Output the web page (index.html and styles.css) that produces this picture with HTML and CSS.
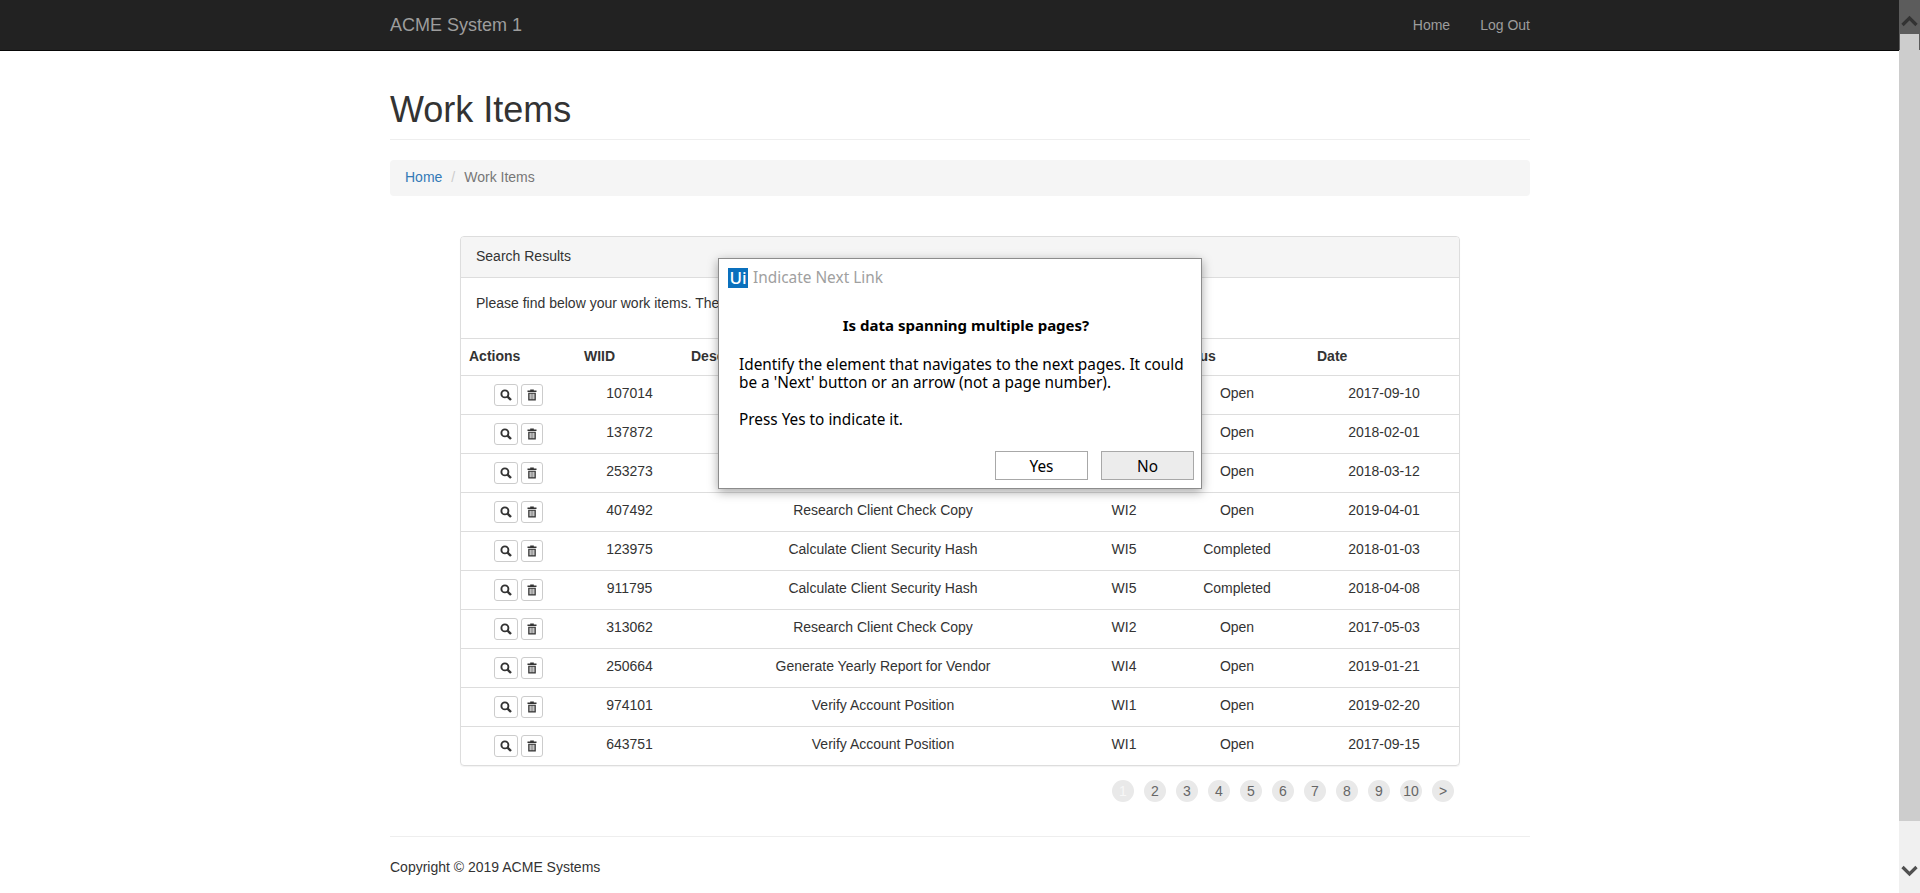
FILE: index.html
```html
<!DOCTYPE html>
<html lang="en">
<head>
    <meta charset="UTF-8">
    <meta name="viewport" content="width=device-width, initial-scale=1.0">
    <title>Work Items</title>
    <link rel="stylesheet" href="styles.css">
</head>
<body>
    <svg class="icon-defs" xmlns="http://www.w3.org/2000/svg">
        <symbol id="icon-search" viewBox="0 0 12 12">
            <circle cx="4.9" cy="4.9" r="3.5" fill="none" stroke="currentColor" stroke-width="1.9"/>
            <path d="M7.6 7.6 L11 11" fill="none" stroke="currentColor" stroke-width="2.4"/>
        </symbol>
        <symbol id="icon-trash" viewBox="0 0 12 12">
            <path fill="currentColor" fill-rule="evenodd" d="M4.2 0.5 H7.8 V1.6 H10.5 V3 H1.5 V1.6 H4.2 Z M2.2 3.7 H9.8 V11.5 H2.2 Z M3.6 4.8 V10.2 H4.7 V4.8 Z M5.45 4.8 V10.2 H6.55 V4.8 Z M7.3 4.8 V10.2 H8.4 V4.8 Z"/>
        </symbol>
    </svg>

    <nav class="navbar">
        <div class="container navbar-inner">
            <a class="brand">ACME System 1</a>
            <ul class="nav-links">
                <li><a>Home</a></li>
                <li><a>Log Out</a></li>
            </ul>
        </div>
    </nav>

    <div class="container">
        <div class="page-header">
            <h1>Work Items</h1>
        </div>

        <ol class="breadcrumb">
            <li><a>Home</a></li>
            <li class="sep">/</li>
            <li class="current">Work Items</li>
        </ol>

        <div class="results">
            <div class="panel">
                <div class="panel-heading">Search Results</div>
                <div class="panel-body">Please find below your work items. There are more pages below.</div>
                <table class="items">
                    <thead>
                        <tr>
                            <th class="col-actions">Actions</th>
                            <th class="col-id">WIID</th>
                            <th class="col-desc">Description</th>
                            <th class="col-type">Type</th>
                            <th class="col-status">Status</th>
                            <th class="col-date">Date</th>
                        </tr>
                    </thead>
                    <tbody>
                        <tr>
                            <td><div class="actions"><button class="btn-xs btn-view"><svg class="icon"><use href="#icon-search"/></svg></button><button class="btn-xs"><svg class="icon"><use href="#icon-trash"/></svg></button></div></td>
                            <td>107014</td><td>Calculate Client Security Hash</td><td>WI5</td><td>Open</td><td>2017-09-10</td>
                        </tr>
                        <tr>
                            <td><div class="actions"><button class="btn-xs btn-view"><svg class="icon"><use href="#icon-search"/></svg></button><button class="btn-xs"><svg class="icon"><use href="#icon-trash"/></svg></button></div></td>
                            <td>137872</td><td>Research Client Check Copy</td><td>WI2</td><td>Open</td><td>2018-02-01</td>
                        </tr>
                        <tr>
                            <td><div class="actions"><button class="btn-xs btn-view"><svg class="icon"><use href="#icon-search"/></svg></button><button class="btn-xs"><svg class="icon"><use href="#icon-trash"/></svg></button></div></td>
                            <td>253273</td><td>Verify Account Position</td><td>WI1</td><td>Open</td><td>2018-03-12</td>
                        </tr>
                        <tr>
                            <td><div class="actions"><button class="btn-xs btn-view"><svg class="icon"><use href="#icon-search"/></svg></button><button class="btn-xs"><svg class="icon"><use href="#icon-trash"/></svg></button></div></td>
                            <td>407492</td><td>Research Client Check Copy</td><td>WI2</td><td>Open</td><td>2019-04-01</td>
                        </tr>
                        <tr>
                            <td><div class="actions"><button class="btn-xs btn-view"><svg class="icon"><use href="#icon-search"/></svg></button><button class="btn-xs"><svg class="icon"><use href="#icon-trash"/></svg></button></div></td>
                            <td>123975</td><td>Calculate Client Security Hash</td><td>WI5</td><td>Completed</td><td>2018-01-03</td>
                        </tr>
                        <tr>
                            <td><div class="actions"><button class="btn-xs btn-view"><svg class="icon"><use href="#icon-search"/></svg></button><button class="btn-xs"><svg class="icon"><use href="#icon-trash"/></svg></button></div></td>
                            <td>911795</td><td>Calculate Client Security Hash</td><td>WI5</td><td>Completed</td><td>2018-04-08</td>
                        </tr>
                        <tr>
                            <td><div class="actions"><button class="btn-xs btn-view"><svg class="icon"><use href="#icon-search"/></svg></button><button class="btn-xs"><svg class="icon"><use href="#icon-trash"/></svg></button></div></td>
                            <td>313062</td><td>Research Client Check Copy</td><td>WI2</td><td>Open</td><td>2017-05-03</td>
                        </tr>
                        <tr>
                            <td><div class="actions"><button class="btn-xs btn-view"><svg class="icon"><use href="#icon-search"/></svg></button><button class="btn-xs"><svg class="icon"><use href="#icon-trash"/></svg></button></div></td>
                            <td>250664</td><td>Generate Yearly Report for Vendor</td><td>WI4</td><td>Open</td><td>2019-01-21</td>
                        </tr>
                        <tr>
                            <td><div class="actions"><button class="btn-xs btn-view"><svg class="icon"><use href="#icon-search"/></svg></button><button class="btn-xs"><svg class="icon"><use href="#icon-trash"/></svg></button></div></td>
                            <td>974101</td><td>Verify Account Position</td><td>WI1</td><td>Open</td><td>2019-02-20</td>
                        </tr>
                        <tr>
                            <td><div class="actions"><button class="btn-xs btn-view"><svg class="icon"><use href="#icon-search"/></svg></button><button class="btn-xs"><svg class="icon"><use href="#icon-trash"/></svg></button></div></td>
                            <td>643751</td><td>Verify Account Position</td><td>WI1</td><td>Open</td><td>2017-09-15</td>
                        </tr>
                    </tbody>
                </table>
            </div>

            <div class="pagination">
                <a class="page active">1</a>
                <a class="page">2</a>
                <a class="page">3</a>
                <a class="page">4</a>
                <a class="page">5</a>
                <a class="page">6</a>
                <a class="page">7</a>
                <a class="page">8</a>
                <a class="page">9</a>
                <a class="page">10</a>
                <a class="page">&gt;</a>
            </div>
        </div>

        <footer class="footer">Copyright © 2019 ACME Systems</footer>
    </div>

    <!-- UiPath prompt sits over the page -->
    <div class="dialog">
        <div class="dialog-title">
            <span class="logo">Ui</span>
            <span>Indicate Next Link</span>
        </div>
        <p class="dialog-question">Is data spanning multiple pages?</p>
        <p class="dialog-text">Identify the element that navigates to the next pages. It could be a 'Next' button or an arrow (not a page number).</p>
        <p class="dialog-text dialog-press">Press Yes to indicate it.</p>
        <div class="dialog-buttons">
            <button class="dialog-btn">Yes</button>
            <button class="dialog-btn dialog-btn-no">No</button>
        </div>
    </div>

    <!-- Browser scrollbar as captured in the screenshot -->
    <div class="scrollbar">
        <div class="scroll-up">
            <svg width="17" height="12" viewBox="0 0 17 12"><path d="M1.5 10 L8.5 3 L15.5 10" fill="none" stroke="#333" stroke-width="3.2"/></svg>
        </div>
        <div class="scroll-thumb"></div>
        <div class="scroll-track">
            <svg width="17" height="12" viewBox="0 0 17 12"><path d="M1.5 2 L8.5 9 L15.5 2" fill="none" stroke="#505050" stroke-width="3.2"/></svg>
        </div>
    </div>
</body>
</html>
```

FILE: styles.css
```css
html, body {
    height: 100%;
    overflow: hidden;
}

body {
    margin: 0;
    font-family: "Liberation Sans", Arial, sans-serif;
    font-size: 14px;
    line-height: 20px;
    color: #333;
    background-color: #fff;
}

.icon-defs {
    display: none;
}

.container {
    width: 1140px;
    margin: 0 auto;
}

/* navbar */
.navbar {
    height: 50px;
    background-color: #222;
    border-bottom: 1px solid #080808;
}

.navbar-inner {
    display: flex;
    justify-content: space-between;
    align-items: center;
    height: 50px;
}

.brand {
    font-size: 18px;
    color: #9d9d9d;
}

.nav-links {
    display: flex;
    gap: 30px;
    list-style: none;
    margin: 0;
    padding: 0;
    color: #9d9d9d;
}

/* page title */
.page-header {
    padding: 39px 0 9px;
    border-bottom: 1px solid #eee;
}

h1 {
    margin: 0;
    font-size: 36px;
    font-weight: 500;
    line-height: 40px;
    color: #333;
}

.breadcrumb {
    display: flex;
    list-style: none;
    margin: 20px 0 40px;
    padding: 7px 15px 9px;
    background-color: #f5f5f5;
    border-radius: 4px;
}

.breadcrumb a {
    color: #337ab7;
}

.breadcrumb .sep {
    padding: 0 9px;
    color: #ccc;
}

.breadcrumb .current {
    color: #777;
}

/* results panel */
.results {
    width: 1000px;
    margin-left: 70px;
}

.panel {
    border: 1px solid #ddd;
    border-radius: 4px;
    box-shadow: 0 1px 1px rgba(0,0,0,0.05);
    overflow: hidden;
}

.panel-heading {
    padding: 9px 15px 11px;
    background-color: #f5f5f5;
    border-bottom: 1px solid #ddd;
}

.panel-body {
    padding: 15px 15px 25px;
    height: 20px;
}

.items {
    width: 100%;
    table-layout: fixed;
    border-collapse: collapse;
}

.items th {
    box-sizing: border-box;
    padding: 7px 8px 9px;
    text-align: left;
    border-top: 1px solid #ddd;
    border-bottom: 1px solid #ddd;
    font-weight: bold;
}

.items td {
    box-sizing: border-box;
    height: 39px;
    padding: 7px 8px 0;
    text-align: center;
    vertical-align: top;
    border-top: 1px solid #ddd;
}

.items tr:last-child td {
    height: 38px;
}

.col-actions { width: 115px; }
.col-id { width: 107px; }
.col-desc { width: 400px; }
.col-type { width: 82px; }
.col-status { width: 144px; }

.actions {
    display: flex;
    justify-content: center;
    gap: 3px;
    margin-top: 1px;
}

.btn-xs {
    display: flex;
    justify-content: center;
    align-items: center;
    width: 22px;
    height: 22px;
    padding: 0;
    color: #333;
    background-color: #fff;
    border: 1px solid #ccc;
    border-radius: 3px;
}

.btn-view {
    width: 24px;
}

.icon {
    width: 12px;
    height: 12px;
}

/* pagination */
.pagination {
    display: flex;
    justify-content: flex-end;
    gap: 10px;
    margin-top: 14px;
    padding-right: 6px;
}

.page {
    width: 22px;
    height: 22px;
    line-height: 22px;
    text-align: center;
    color: #666;
    background-color: #e9e9e9;
    border-radius: 50%;
}

.page.active {
    color: #f7f7f7;
}

.footer {
    margin-top: 34px;
    padding-top: 20px;
    border-top: 1px solid #eee;
}

/* dialog */
.dialog {
    position: absolute;
    left: 718px;
    top: 258px;
    width: 482px;
    height: 229px;
    font-family: "Noto Sans", "Open Sans", sans-serif;
    font-size: 15.35px;
    line-height: 18px;
    color: #000;
    background-color: #fff;
    border: 1px solid #8c8c8c;
    box-shadow: 0 3px 10px rgba(0,0,0,0.35);
}

.dialog-title {
    display: flex;
    align-items: center;
    gap: 5px;
    height: 20px;
    margin: 9px 0 0 9px;
    font-size: 15.4px;
    color: #a0a0a0;
}

.logo {
    width: 20px;
    height: 20px;
    line-height: 20px;
    text-align: center;
    font-size: 17px;
    font-weight: 500;
    color: #fff;
    background-color: #0a70bd;
}

.dialog-question {
    margin: 28px 0 0;
    padding-left: 12px;
    text-align: center;
    font-size: 15px;
    font-weight: bold;
}

.dialog-text {
    margin: 21px 10px 0 20px;
}

.dialog-press {
    margin-top: 19px;
}

.dialog-buttons {
    position: absolute;
    right: 7px;
    bottom: 8px;
    display: flex;
    gap: 13px;
}

.dialog-btn {
    width: 93px;
    height: 29px;
    padding: 0;
    font-family: inherit;
    font-size: 15.35px;
    color: #000;
    background-color: #fff;
    border: 1px solid #a8a8a8;
}

.dialog-btn-no {
    background-color: #ececec;
}

/* scrollbar */
.scrollbar {
    position: fixed;
    top: 0;
    right: 0;
    bottom: 0;
    width: 21px;
    display: flex;
    flex-direction: column;
}

.scroll-up {
    display: flex;
    justify-content: center;
    align-items: flex-start;
    padding-top: 15px;
    height: 19px;
    background-color: #5c5c5c;
}

.scroll-thumb {
    height: 787px;
    background-color: #cdcdcd;
    /* dark edges where the thumb passes over the navbar */
    background-image: linear-gradient(#5c5c5c, #5c5c5c), linear-gradient(#5c5c5c, #5c5c5c);
    background-position: left top, right top;
    background-size: 1px 16px, 1px 16px;
    background-repeat: no-repeat;
}

.scroll-track {
    flex: 1;
    display: flex;
    justify-content: center;
    align-items: flex-end;
    padding-bottom: 16px;
    background-color: #f0f0f0;
}
```
